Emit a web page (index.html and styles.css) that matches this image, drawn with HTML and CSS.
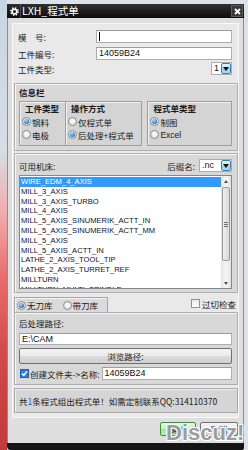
FILE: index.html
```html
<!DOCTYPE html>
<html>
<head>
    <meta charset="utf-8">
    <link rel="stylesheet" href="styles.css">
</head>
<body>
    <div class="window">
        <div class="titlebar">
            <span class="sysicon">
                <svg width="9" height="9" viewBox="0 0 9 9"><circle cx="4.5" cy="4.5" r="3.5" fill="none" stroke="#fff" stroke-width="1.8" stroke-dasharray="1.4 1.35"/><circle cx="4.5" cy="4.5" r="2.3" fill="none" stroke="#fff" stroke-width="1.5"/></svg>
            </span>
            <span class="title">LXH_程式单</span>
            <span class="close">
                <svg width="7" height="7" viewBox="0 0 7 7"><path d="M1 1L6 6M6 1L1 6" stroke="#fff" stroke-width="1.8"/></svg>
            </span>
        </div>

        <div class="client">
            <div class="panel">
                <div class="fields">
                    <div class="field">
                        <span class="label">模　号:</span>
                        <div class="edit"><span class="caret"></span></div>
                    </div>
                    <div class="field second">
                        <span class="label">工件编号:</span>
                        <div class="edit">14059B24</div>
                    </div>
                    <div class="field third">
                        <span class="label">工件类型:</span>
                        <div class="combo small"><span class="value">1</span><span class="drop"></span></div>
                    </div>
                </div>

                <div class="group info">
                    <div class="group-title">信息栏</div>
                    <div class="info-boxes">
                        <div class="box pair">
                            <div class="col c1">
                                <div class="head">工件类型</div>
                                <div class="opt"><span class="radio on"></span>钢料</div>
                                <div class="opt"><span class="radio"></span>电极</div>
                            </div>
                            <div class="col c2">
                                <div class="head">操作方式</div>
                                <div class="opt"><span class="radio"></span>仅程式单</div>
                                <div class="opt"><span class="radio on"></span>后处理+程式单</div>
                            </div>
                        </div>
                        <div class="box c3">
                            <div class="head">程式单类型</div>
                            <div class="opt"><span class="radio on"></span>制图</div>
                            <div class="opt"><span class="radio"></span><span class="latin">Excel</span></div>
                        </div>
                    </div>
                </div>

                <div class="group machines">
                    <div class="list-head">
                        <span>可用机床:</span>
                        <span class="suffix">后缀名:</span>
                        <div class="combo ext"><span class="value">.nc</span><span class="drop"></span></div>
                    </div>
                    <div class="listbox">
                        <div class="items">
                            <div class="selected">WIRE_EDM_4_AXIS</div>
                            <div>MILL_3_AXIS</div>
                            <div>MILL_3_AXIS_TURBO</div>
                            <div>MILL_4_AXIS</div>
                            <div>MILL_5_AXIS_SINUMERIK_ACTT_IN</div>
                            <div>MILL_5_AXIS_SINUMERIK_ACTT_MM</div>
                            <div>MILL_5_AXIS</div>
                            <div>MILL_5_AXIS_ACTT_IN</div>
                            <div>LATHE_2_AXIS_TOOL_TIP</div>
                            <div>LATHE_2_AXIS_TURRET_REF</div>
                            <div>MILLTURN</div>
                            <div>MILLTURN_MULTI_SPINDLE</div>
                        </div>
                        <div class="scrollbar">
                            <span class="sb-arrow up"></span>
                            <span class="sb-thumb"><i></i><i></i><i></i></span>
                            <span class="sb-track"></span>
                            <span class="sb-arrow down"></span>
                        </div>
                    </div>
                </div>

                <div class="tabrow">
                    <div class="tab">
                        <span class="radio on"></span><span class="tab-label">无刀库</span>
                        <span class="radio"></span><span class="tab-label">带刀库</span>
                    </div>
                    <div class="cutcheck"><span class="check"></span>过切检查</div>
                </div>

                <div class="group post">
                    <div class="post-label">后处理路径:</div>
                    <div class="edit path">E:\CAM</div>
                    <div class="browse">浏览路径:</div>
                    <div class="mkdir">
                        <span class="check on">
                            <svg width="7" height="7" viewBox="0 0 7 7"><path d="M1 3.6L2.8 5.4L6 1.4" fill="none" stroke="#fff" stroke-width="1.5"/></svg>
                        </span>
                        <span class="mkdir-label">创建文件夹->名称:</span>
                        <div class="edit">14059B24</div>
                    </div>
                </div>

                <div class="status">共<span class="num">1</span>条程式组出程式单！如需定制联系QQ:314110370</div>
            </div>

            <div class="buttons">
                <div class="btn default">确定</div>
                <div class="btn">取消</div>
            </div>
        </div>
    </div>

    <div class="watermark">Discuz!</div>
</body>
</html>
```

FILE: styles.css
```css
* {
    box-sizing: border-box;
}
body {
    margin: 0;
    width: 248px;
    height: 450px;
    overflow: hidden;
    position: relative;
    padding: 4px 0 0 7px;
    font-family: "Noto Sans CJK SC", "Liberation Sans", sans-serif;
    font-size: 8.5px;
    color: #1a1a1a;
    background: linear-gradient(180deg, #c8d5e2 0, #d6dee7 150px, #f3a9a9 215px, #e86a6a 280px, #d04848 360px, #c23a3a 450px) 0 0 / 7px 100% no-repeat, #dbe2ea;
}
.window {
    width: 237px;
    height: 446px;
    display: flex;
    flex-direction: column;
    border-bottom: 7px solid #151515;
    border-radius: 0 0 2px 4px;
}
.titlebar {
    height: 14px;
    display: flex;
    align-items: center;
    background: linear-gradient(#303030, #0c0c0c);
    color: #fff;
}
.sysicon {
    width: 13px;
    height: 14px;
    display: flex;
    align-items: center;
    justify-content: center;
    border-right: 1px solid #4a4a4a;
    margin-left: 1px;
}
.title {
    flex: 1;
    margin-left: 1px;
    font-size: 10.5px;
    line-height: 14px;
}
.close {
    width: 12px;
    height: 12px;
    margin-right: 1px;
    display: flex;
    align-items: center;
    justify-content: center;
    background: #383838;
    border: 1px solid #5c5c5c;
}
.client {
    flex: 1;
    background: #dedede;
    border-left: 1px solid #8c8c8c;
    border-right: 1px solid #8c8c8c;
    padding: 5px 4px 7px;
    display: flex;
    flex-direction: column;
}
.panel {
    height: 395px;
    background: #e9e9e9;
    border: 1px solid #f8f8f8;
    padding: 6px 0 4px 1px;
    display: flex;
    flex-direction: column;
}

/* top fields */
.fields {
    padding: 0 6px 0 4px;
}
.field {
    height: 13px;
    display: flex;
    align-items: center;
}
.field.second {
    margin-top: 4px;
}
.field.third {
    margin-top: 2px;
}
.field .label {
    width: 78px;
}
.edit {
    flex: 1;
    height: 13px;
    background: #fff;
    border: 1px solid #abadb3;
    border-top-color: #9a9ca3;
    padding-left: 2px;
    font-family: "Liberation Sans", sans-serif;
    font-size: 9px;
    line-height: 11px;
    color: #111;
    display: flex;
    align-items: center;
}
.caret {
    width: 1px;
    height: 9px;
    background: #000;
}
.combo {
    height: 13px;
    display: flex;
    background: #fff;
    border: 1px solid #abadb3;
    font-family: "Liberation Sans", sans-serif;
    font-size: 9px;
}
.combo .value {
    flex: 1;
    padding-left: 2px;
    line-height: 11px;
}
.combo.small {
    margin-left: auto;
    width: 21px;
}
.combo.ext {
    width: 33px;
}
.drop {
    width: 10px;
    display: flex;
    align-items: center;
    justify-content: center;
    border: 1px solid #3c7fb1;
    border-radius: 2px;
    background: linear-gradient(#e5f4fd, #bfe1f8 50%, #97cbf1 50%, #b3dbf7);
}
.drop::after {
    content: '';
    border-left: 3px solid transparent;
    border-right: 3px solid transparent;
    border-top: 4px solid #111;
}

/* group boxes */
.group {
    background: #d8d8d8;
    border: 1px solid #aeaeae;
    box-shadow: inset 1px 1px 0 #f6f6f6;
}
.group.info {
    margin-top: 8px;
    height: 68px;
    padding: 2px 5px 0 4px;
}
.group-title {
    height: 12px;
    line-height: 12px;
    font-weight: bold;
}
.info-boxes {
    margin-top: 3px;
    height: 45px;
    display: flex;
    gap: 5px;
}
.box {
    background: #d4d4d4;
    border: 1px solid #9e9e9e;
    box-shadow: inset 1px 1px 0 #f0f0f0;
}
.pair {
    width: 124px;
    display: flex;
}
.col.c1 {
    width: 45px;
}
.col.c2 {
    flex: 1;
    border-left: 1px solid #9e9e9e;
    box-shadow: inset 1px 0 0 #f0f0f0;
}
.box.c3 {
    width: 85px;
}
.head {
    height: 13px;
    line-height: 13px;
    padding-left: 5px;
    font-weight: bold;
}
.opt {
    height: 13px;
    display: flex;
    align-items: center;
    gap: 1px;
    padding-left: 2px;
    white-space: nowrap;
}
.latin {
    font-family: "Liberation Sans", sans-serif;
}
.radio {
    flex: none;
    position: relative;
    width: 9px;
    height: 9px;
    border-radius: 50%;
    border: 1px solid #8a8a8a;
    background: radial-gradient(circle at 50% 40%, #ffffff, #d6d6d6);
}
.radio.on::after {
    content: '';
    position: absolute;
    left: 1px;
    top: 1px;
    width: 5px;
    height: 5px;
    border-radius: 50%;
    background: radial-gradient(circle at 40% 35%, #a8e4ff, #2a7fe0 60%, #1456b8);
}
.check {
    flex: none;
    width: 9px;
    height: 9px;
    border: 1px solid #8e8f8f;
    background: linear-gradient(#e8e8e8, #ffffff);
    display: flex;
    align-items: center;
    justify-content: center;
}
.check.on {
    border-color: #1f5ea8;
    background: #2f7fe0;
}

/* machine list */
.group.machines {
    margin-top: 2px;
    height: 140px;
    padding: 5px 5px 3px 4px;
    display: flex;
    flex-direction: column;
}
.list-head {
    height: 13px;
    display: flex;
    align-items: center;
}
.list-head .suffix {
    margin-left: auto;
    margin-right: 4px;
}
.listbox {
    margin-top: 3px;
    height: 114px;
    display: flex;
    background: #fff;
    border: 1px solid #828790;
}
.items {
    flex: 1;
    overflow: hidden;
    padding-top: 1px;
    font-family: "Liberation Sans", sans-serif;
    font-size: 7.6px;
    line-height: 9.8px;
    color: #101030;
}
.items div {
    padding-left: 1px;
    white-space: nowrap;
}
.items .selected {
    background: #3399ff;
    color: #fff;
}
.scrollbar {
    width: 10px;
    display: flex;
    flex-direction: column;
    background: linear-gradient(90deg, #e2e2e2, #f3f3f3 40%, #f3f3f3 60%, #e2e2e2);
}
.sb-arrow {
    height: 10px;
    display: flex;
    align-items: center;
    justify-content: center;
}
.sb-arrow.up::after {
    content: '';
    border-left: 2.5px solid transparent;
    border-right: 2.5px solid transparent;
    border-bottom: 3px solid #505050;
}
.sb-arrow.down::after {
    content: '';
    border-left: 2.5px solid transparent;
    border-right: 2.5px solid transparent;
    border-top: 3px solid #505050;
}
.sb-thumb {
    height: 74px;
    margin: 1px 1px 0;
    border: 1px solid #9a9a9a;
    border-radius: 2px;
    background: linear-gradient(90deg, #f0f0f0, #d8d8d8);
    display: flex;
    flex-direction: column;
    align-items: center;
    justify-content: center;
    gap: 1px;
}
.sb-thumb i {
    width: 4px;
    height: 1px;
    background: #707070;
}
.sb-track {
    flex: 1;
}

/* tab row */
.tabrow {
    margin-top: 4px;
    height: 15px;
    display: flex;
    white-space: nowrap;
}
.tab {
    flex: none;
    width: 94px;
    display: flex;
    align-items: center;
    padding-left: 2px;
    background: #dadada;
    border: 1px solid #a5a5a5;
    border-bottom: none;
    box-shadow: inset 1px 1px 0 #f4f4f4;
}
.tab-label {
    flex: none;
    margin-left: 1px;
    margin-right: 10px;
}
.cutcheck {
    margin-left: auto;
    margin-right: 2px;
    padding-bottom: 2px;
    display: flex;
    align-items: center;
    gap: 2px;
}

/* post processor */
.group.post {
    height: 73px;
    padding: 4px 5px 4px 4px;
    display: flex;
    flex-direction: column;
}
.post-label {
    height: 12px;
    line-height: 12px;
}
.edit.path {
    flex: none;
    margin-top: 4px;
    height: 12px;
}
.browse {
    margin-top: 3px;
    height: 16px;
    line-height: 14px;
    text-align: center;
    border: 1px solid #707070;
    border-radius: 2px;
    background: linear-gradient(#f4f4f4, #ebebeb 50%, #dcdcdc 50%, #cfcfcf);
}
.mkdir {
    margin-top: 3px;
    height: 13px;
    display: flex;
    align-items: center;
    padding-left: 1px;
    white-space: nowrap;
}
.mkdir-label {
    margin-left: 1px;
    margin-right: 2px;
}

/* status line */
.status {
    margin-top: 3px;
    height: 25px;
    display: flex;
    align-items: center;
    padding-left: 4px;
    background: #d5d5d5;
    border: 1px solid #a8a8a8;
    box-shadow: inset 1px 1px 0 #efefef;
    white-space: nowrap;
}
.status .num {
    color: #1d58c8;
}

/* dialog buttons */
.buttons {
    margin-top: 4px;
    height: 14px;
    display: flex;
    justify-content: flex-end;
    gap: 4px;
    padding-right: 1px;
}
.btn {
    width: 38px;
    line-height: 12px;
    text-align: center;
    border: 1px solid #707070;
    border-radius: 2px;
    background: linear-gradient(#f4f4f4, #ebebeb 50%, #dcdcdc 50%, #cfcfcf);
}
.btn.default {
    width: 36px;
    border-color: #3f8f3a;
    background: linear-gradient(#eaf8e6, #c5ecbb 50%, #a9e09c 50%, #c0eab4);
}
.watermark {
    position: absolute;
    left: 166px;
    top: 420px;
    font-family: "Liberation Sans", sans-serif;
    font-weight: bold;
    font-size: 22px;
    color: #9c9c9c;
    text-shadow: 1px 1px 0 #fff, -1px -1px 0 #fff, 1px -1px 0 #fff, -1px 1px 0 #fff;
}
```
